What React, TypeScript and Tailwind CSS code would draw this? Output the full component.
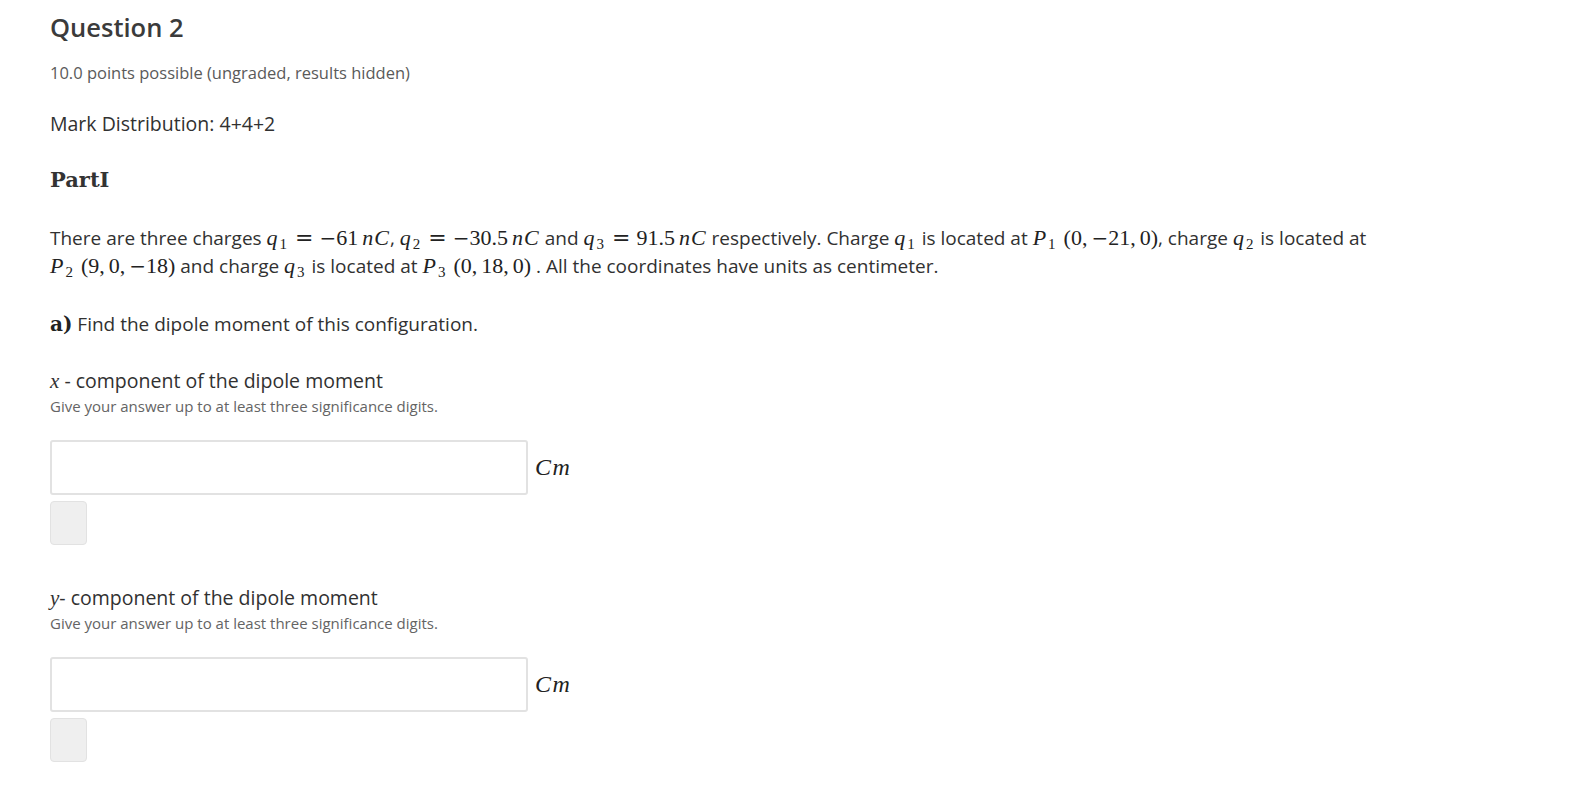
import React from 'react';

const body = { fontFamily: '"Open Sans", "Noto Sans", sans-serif' };
const serif = { fontFamily: '"Liberation Serif", "DejaVu Serif", serif' };
const dejavu = { fontFamily: '"DejaVu Serif", "Liberation Serif", serif' };

// italic math letter with optional subscript
const V = ({ v, sub }: { v: string; sub?: string }) => (
    <span className="italic text-[22px] tracking-[1px] text-[#222] whitespace-nowrap" style={serif}>
        {v}
        {sub && <sub className="not-italic text-[15px] ml-[1px] mr-[1px]">{sub}</sub>}
    </span>
);

// upright math text
const N = ({ children }: { children: React.ReactNode }) => (
    <span className="text-[22px] text-[#222] whitespace-nowrap" style={serif}>
        {children}
    </span>
);

const Eq = () => (
    <span className="mx-[6px] text-[22px] text-[#222]" style={dejavu}>=</span>
);

const Minus = () => (
    <span className="text-[20px] text-[#222]" style={dejavu}>−</span>
);

// point label followed by its coordinates, kept on one line
const Pt = ({ p, a, b, c }: { p: string; a: React.ReactNode; b: React.ReactNode; c: React.ReactNode }) => (
    <span className="whitespace-nowrap">
        <V v="P" sub={p} />
        <span className="ml-[6px]" />
        <N>
            ({a},<span className="ml-[4px]" />
            {b},<span className="ml-[4px]" />
            {c})
        </N>
    </span>
);

const nC = (
    <span className="ml-[4px]">
        <V v="nC" />
    </span>
);

const AnswerBlock = ({ axis, dash }: { axis: string; dash: string }) => (
    <div className="flex flex-col">
        <div className="text-[19.5px] leading-[26px] text-[#313131]">
            <span className="italic text-[21px]" style={serif}>{axis}</span>
            {dash}component of the dipole moment
        </div>
        <div className="mt-[2px] text-[15px] leading-[20px] text-[#646464]">
            Give your answer up to at least three significance digits.
        </div>
        <div className="mt-[24px] flex items-center">
            <input
                type="text"
                className="h-[55px] w-[478px] rounded-[3px] border-2 border-[#e2e2e2] bg-white"
            />
            <span className="ml-[7px] mb-[2px] italic text-[24px] tracking-[1.5px] text-[#222]" style={serif}>Cm</span>
        </div>
        <button className="mt-[6px] h-[44px] w-[37px] rounded-[4px] border border-[#e2e2e2] bg-[#efefef]" />
    </div>
);

export default function App() {
    return (
        <div className="min-h-screen bg-white pl-[50px] pt-[11px]" style={body}>
            <h2 className="text-[25.5px] leading-[32px] font-semibold text-[#3b3b3b]">Question 2</h2>
            <div className="mt-[18px] text-[16.5px] leading-[24px] text-[#5a5a5a]">
                10.0 points possible (ungraded, results hidden)
            </div>
            <div className="mt-[25px] text-[19.5px] leading-[28px] text-[#313131]">Mark Distribution: 4+4+2</div>
            <div className="mt-[28px] text-[21px] leading-[28px] font-bold text-[#333]" style={dejavu}>
                PartI
            </div>
            <p className="mt-[30px] max-w-[1380px] text-[19px] leading-[28px] text-[#313131]">
                There are three charges <V v="q" sub="1" />
                <Eq />
                <Minus />
                <N>61</N>
                {nC}, <V v="q" sub="2" />
                <Eq />
                <Minus />
                <N>30.5</N>
                {nC} and <V v="q" sub="3" />
                <Eq />
                <N>91.5</N>
                {nC} respectively. Charge <V v="q" sub="1" /> is located at{' '}
                <Pt p="1" a="0" b={<><Minus />21</>} c="0" />, charge <V v="q" sub="2" /> is located at{' '}
                <Pt p="2" a="9" b="0" c={<><Minus />18</>} /> and charge <V v="q" sub="3" /> is located at{' '}
                <Pt p="3" a="0" b="18" c="0" /> . All the coordinates have units as centimeter.
            </p>
            <div className="mt-[30px] text-[19px] leading-[28px] text-[#313131]">
                <span className="text-[20px] font-bold text-[#222]" style={dejavu}>a)</span> Find the dipole moment of this
                configuration.
            </div>
            <div className="mt-[30px]">
                <AnswerBlock axis="x" dash=" - " />
            </div>
            <div className="mt-[40px]">
                <AnswerBlock axis="y" dash="- " />
            </div>
        </div>
    );
}
